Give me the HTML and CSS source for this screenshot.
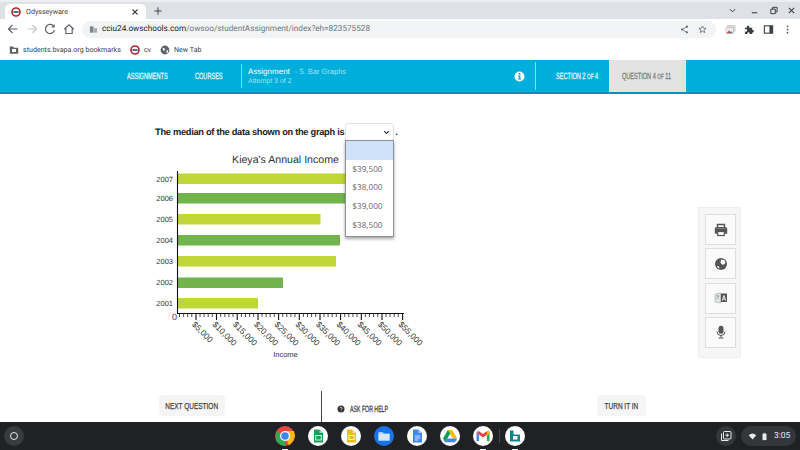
FILE: index.html
```html
<!DOCTYPE html>
<html lang="en">
<head>
<meta charset="utf-8">
<title>Odysseyware</title>
<link rel="stylesheet" href="styles.css">
</head>
<body>
<div class="screen">
  <div class="tabstrip">
    <div class="tab">
      <svg class="fav" viewBox="0 0 10 10"><circle cx="5" cy="5" r="4" fill="#fff" stroke="#b3202c" stroke-width="1.6"/><rect x="2.4" y="4.2" width="5.2" height="1.6" fill="#2b4c7e"/></svg>
      <span class="tab-title">Odysseyware</span>
      <svg class="tab-x" viewBox="0 0 8 8"><path d="M1.5 1.5l5 5M6.5 1.5l-5 5" stroke="#3c4043" stroke-width="1.1"/></svg>
    </div>
    <svg class="tab-plus" viewBox="0 0 10 10"><path d="M5 .5v9M.5 5h9" stroke="#3c4043" stroke-width="1.2"/></svg>
    <div class="win-controls">
      <svg class="win-chevron" viewBox="0 0 10 10"><path d="M2 3.5L5 6.5 8 3.5" fill="none" stroke="#3c4043" stroke-width="1.1"/></svg>
      <svg viewBox="0 0 10 10"><path d="M2 7.5h6" stroke="#3c4043" stroke-width="1.2"/></svg>
      <svg viewBox="0 0 10 10"><path d="M2 3.5h5v5H2zM4 3.5V1.5h5v5H7" fill="none" stroke="#3c4043" stroke-width="1.1"/></svg>
      <svg viewBox="0 0 10 10"><path d="M2 2l6 6M8 2l-6 6" stroke="#3c4043" stroke-width="1.2"/></svg>
    </div>
  </div>

  <div class="toolbar">
    <svg class="nav" viewBox="0 0 12 12"><path d="M10.5 6h-9M5.5 2L1.5 6l4 4" fill="none" stroke="#5f6368" stroke-width="1.2"/></svg>
    <svg class="nav" viewBox="0 0 12 12"><path d="M1.5 6h9M6.5 2l4 4-4 4" fill="none" stroke="#c4c7ca" stroke-width="1.2"/></svg>
    <svg class="nav" viewBox="0 0 12 12"><path d="M10 3.6A4.6 4.6 0 1 0 10.5 7" fill="none" stroke="#5f6368" stroke-width="1.2"/><path d="M10.6 1v3.4H7.2z" fill="#5f6368"/></svg>
    <svg class="nav" viewBox="0 0 12 12"><path d="M1.2 6.2L6 1.8l4.8 4.4M2.8 5.2v5.3h6.4V5.2" fill="none" stroke="#5f6368" stroke-width="1.2"/></svg>
    <div class="omnibox">
      <svg class="site" viewBox="0 0 10 10"><path d="M1 1.5h4v7H1z" fill="#80868b"/><path d="M5 3.5h4v5H5z" fill="#a9adb2"/></svg>
      <span class="url"><span class="url-host">cciu24.owschools.com</span>/owsoo/studentAssignment/index?eh=823575528</span>
      <svg class="omni-icon share" viewBox="0 0 12 12"><circle cx="9.2" cy="2.2" r="1.4" fill="#5f6368"/><circle cx="2.8" cy="6" r="1.4" fill="#5f6368"/><circle cx="9.2" cy="9.8" r="1.4" fill="#5f6368"/><path d="M9.2 2.2L2.8 6l6.4 3.8" fill="none" stroke="#5f6368"/></svg>
      <svg class="omni-icon" viewBox="0 0 12 12"><path d="M6 1.3l1.4 3.1 3.4.3-2.6 2.2.8 3.3L6 8.2l-3 1.8.8-3.3-2.6-2.2 3.4-.3z" fill="none" stroke="#5f6368"/></svg>
    </div>
    <div class="tool-ext">
      <svg viewBox="0 0 12 12"><rect x="3" y="1.5" width="8" height="6.5" fill="#d9dcdf" stroke="#b5b8bb" stroke-width=".5"/><rect x="1" y="4" width="8" height="6.5" fill="#e9ebec" stroke="#a9acaf" stroke-width=".5"/><path d="M1.5 10l3-3 3 3z" fill="#c5463c"/><path d="M5.5 10l1.5-2 1.5 2z" fill="#4a7fb5"/></svg>
      <svg viewBox="0 0 12 12"><path d="M1 4h2.2a1.4 1.4 0 1 1 2.6-.6V4H9v2.6h.4a1.4 1.4 0 1 1 0 2.8H9V11H6.2v-.6a1.3 1.3 0 1 0-2.6 0v.6H1V8.2h.4a1.4 1.4 0 1 0 0-2.6H1z" fill="#3c4043"/></svg>
      <svg viewBox="0 0 12 12"><rect x="1.5" y="2" width="9" height="8" fill="none" stroke="#3c4043" stroke-width="1.2"/><rect x="7" y="2" width="3.5" height="8" fill="#3c4043"/></svg>
      <svg viewBox="0 0 12 12"><circle cx="6" cy="2.5" r="1" fill="#5f6368"/><circle cx="6" cy="6" r="1" fill="#5f6368"/><circle cx="6" cy="9.5" r="1" fill="#5f6368"/></svg>
    </div>
  </div>

  <div class="bookmarks">
    <svg class="bm-icon" viewBox="0 0 10 10"><path d="M.8 1.5h3.2l1 1.2h4.2v6H.8z" fill="#5f6368"/><rect x="3" y="4" width="4" height="3" fill="#fff"/></svg>
    <span class="bm-label">students.bvapa.org bookmarks</span>
    <svg class="bm-icon gap-cv" viewBox="0 0 10 10"><circle cx="5" cy="5" r="4" fill="#fff" stroke="#b3202c" stroke-width="1.6"/><rect x="2.4" y="4.2" width="5.2" height="1.6" fill="#2b4c7e"/></svg>
    <span class="bm-label">cv</span>
    <svg class="bm-icon gap-globe" viewBox="0 0 10 10"><circle cx="5" cy="5" r="4.4" fill="#5f6368"/><path d="M2.5 2.8l2 .5.5 1.6-1.6 1zM6.5 5.5l1.8-.5-.4 2.2-1.3 1z" fill="#fff"/></svg>
    <span class="bm-label">New Tab</span>
  </div>

  <header class="app-header">
    <nav class="app-nav">
      <span class="nav-item nav-assignments"><span class="cond">ASSIGNMENTS</span></span>
      <span class="nav-item nav-courses"><span class="cond">COURSES</span></span>
    </nav>
    <div class="assignment">
      <div class="assignment-line"><b>Assignment</b><span class="assignment-name">- 5. Bar Graphs</span></div>
      <div class="attempt">Attempt 3 of 2</div>
    </div>
    <svg class="info" viewBox="0 0 12 12"><circle cx="6" cy="6" r="5.5" fill="#fff"/><rect x="5" y="2.2" width="2" height="1.8" fill="#00aedb"/><path d="M4.4 5h2.6v3.4h.7v1H4.4v-1h.8V6h-.8z" fill="#00aedb"/></svg>
    <div class="section-label"><span class="cond">SECTION 2 <small>OF</small> 4</span></div>
    <div class="question-label"><span class="cond">QUESTION 4 <small>OF</small> 11</span></div>
  </header>

  <main class="stage">
    <div class="lesson">
      <div class="question">
        <span>The median of the data shown on the graph is</span>
        <div class="select">
          <svg class="chev" viewBox="0 0 8 8"><path d="M1.5 2.5L4 5.2l2.5-2.7" fill="none" stroke="#222" stroke-width="1.2"/></svg>
          <div class="menu">
            <div class="option option-blank"></div>
            <div class="option">$39,500</div>
            <div class="option">$38,000</div>
            <div class="option">$39,000</div>
            <div class="option">$38,500</div>
          </div>
        </div>
        <span>.</span>
      </div>
      <svg class="chart" viewBox="140 150 300 220" width="300" height="220">
        <text class="chart-title" x="285.5" y="163" text-anchor="middle">Kieya's Annual Income</text>
        <g class="bars">
          <rect x="178" y="173.5" width="170" height="10.5" fill="#bfd637"/>
          <rect x="178" y="193" width="170" height="10.5" fill="#72b44c"/>
          <rect x="178" y="214" width="142.500" height="10.500" fill="#bfd637"/>
          <rect x="178" y="235" width="162" height="10.500" fill="#72b44c"/>
          <rect x="178" y="256" width="158" height="10.500" fill="#bfd637"/>
          <rect x="178" y="277.500" width="105" height="10.500" fill="#72b44c"/>
          <rect x="178" y="298" width="80" height="10.500" fill="#bfd637"/>
        </g>
        <g class="ylabels" text-anchor="end">
          <text x="173" y="182">2007</text>
          <text x="173" y="201">2006</text>
          <text x="173" y="222">2005</text>
          <text x="173" y="243">2004</text>
          <text x="173" y="264">2003</text>
          <text x="173" y="285">2002</text>
          <text x="173" y="306">2001</text>
        </g>
        <path d="M177.500 171V314M177 313.500H404" stroke="#111" stroke-width="1.100" fill="none"/>
        <path stroke="#222" stroke-width=".8" d="M179.500 314v3M183.600 314v3M187.700 314v3M191.800 314v3M200 314v3M204.100 314v3M208.200 314v3M212.300 314v3M220.700 314v3M224.800 314v3M228.900 314v3M233 314v3M241.400 314v3M245.500 314v3M249.600 314v3M253.700 314v3M262 314v3M266.100 314v3M270.200 314v3M274.300 314v3M282.700 314v3M286.800 314v3M290.900 314v3M295 314v3M303.400 314v3M307.500 314v3M311.600 314v3M315.700 314v3M324 314v3M328.100 314v3M332.200 314v3M336.300 314v3M344.700 314v3M348.800 314v3M352.900 314v3M357 314v3M365.400 314v3M369.500 314v3M373.600 314v3M377.700 314v3M386 314v3M390.100 314v3M394.200 314v3M398.300 314v3"/>
        <path stroke="#111" stroke-width="1.100" d="M196 314v6M216.500 314v6M237.200 314v6M258 314v6M278.600 314v6M299.300 314v6M320 314v6M340.600 314v6M361.300 314v6M382 314v6M402.600 314v6"/>
        <g class="xlabels">
          <text x="172" y="320" class="zero">0</text>
          <text transform="translate(191.500 325) rotate(45)">$5,000</text>
          <text transform="translate(212 325) rotate(45)">$10,000</text>
          <text transform="translate(232.500 325) rotate(45)">$15,000</text>
          <text transform="translate(253.500 325) rotate(45)">$20,000</text>
          <text transform="translate(274 325) rotate(45)">$25,000</text>
          <text transform="translate(295 325) rotate(45)">$30,000</text>
          <text transform="translate(315.500 325) rotate(45)">$35,000</text>
          <text transform="translate(336 325) rotate(45)">$40,000</text>
          <text transform="translate(357 325) rotate(45)">$45,000</text>
          <text transform="translate(377.500 325) rotate(45)">$50,000</text>
          <text transform="translate(398 325) rotate(45)">$55,000</text>
        </g>
        <text class="axis-title" x="285.500" y="357" text-anchor="middle">Income</text>
      </svg>
    </div>
    <aside class="tools">
      <div class="tool"><svg viewBox="0 0 14 14"><path d="M3.500 5V1.500h7V5M3.500 10H1.500V5.800a1 1 0 0 1 1-1h9a1 1 0 0 1 1 1V10h-2" fill="#fff" stroke="#555" stroke-width="1.400"/><rect x="1" y="5.500" width="12" height="4" fill="#555"/><rect x="3.700" y="8.500" width="6.600" height="4" fill="#fff" stroke="#555" stroke-width="1.200"/></svg></div>
      <div class="tool"><svg viewBox="0 0 14 14"><circle cx="7" cy="7" r="6" fill="#555"/><path d="M7 2.500l3.500.8 1 2.700-2.500 2L6.500 6zM3 9l2 .5 .5 2L4 11z" fill="#fff"/></svg></div>
      <div class="tool"><svg viewBox="0 0 14 14"><path d="M1 3l5.500-1v10L1 11z" fill="#dfe3e3" stroke="#999" stroke-width=".5"/><path d="M7 2.500h6V11H7z" fill="#555"/><path d="M8.300 9.500L10 4.500l1.700 5M9 8h2" stroke="#fff" stroke-width=".9" fill="none"/><path d="M2.500 5h2.500M3.700 4v1M4.500 5c-.3 1.500-1 2.500-2 3" stroke="#777" stroke-width=".6" fill="none"/></svg></div>
      <div class="tool"><svg viewBox="0 0 14 14"><rect x="4.500" y="0.800" width="5" height="8" rx="2.500" fill="#555"/><path d="M3 6.500a4 4 0 0 0 8 0M7 10.500v2M4.500 13h5" fill="none" stroke="#555" stroke-width="1"/></svg></div>
    </aside>
  </main>

  <footer class="actions">
    <button class="action next"><span class="cond-center">NEXT QUESTION</span></button>
    <div class="help">
      <svg viewBox="0 0 8 8"><circle cx="4" cy="4" r="3.500" fill="#333"/><path d="M3 3.200a1 1 0 1 1 1.500.9c-.4.2-.5.4-.5.7" fill="none" stroke="#fff" stroke-width=".7"/><circle cx="4" cy="6" r=".45" fill="#fff"/></svg>
      <span class="cond help-text">ASK FOR HELP</span>
    </div>
    <button class="action turn"><span class="cond-center">TURN IT IN</span></button>
  </footer>

  <div class="shelf">
    <div class="launcher"><span class="launcher-ring"></span></div>
    <div class="dock">
      <svg class="app" viewBox="0 0 20 20"><circle cx="10" cy="10" r="10" fill="#e8453c"/><path d="M10 10L1.300 5 1 15l5 4.200L11 20z" fill="#34a853"/><path d="M10 5h9l1 5-2 5-4 4.500-4-9.500z" fill="#f9bc15"/><circle cx="10" cy="10" r="5" fill="#fff"/><circle cx="10" cy="10" r="3.800" fill="#4285f4"/></svg>
      <svg class="app" viewBox="0 0 20 20"><circle cx="10" cy="10" r="10" fill="#fff"/><path d="M6 3.500h5.500L15 7v9.500H6z" fill="#1e9e5a"/><path d="M11.500 3.500L15 7h-3.500z" fill="#8ed1ab"/><rect x="7.800" y="9.500" width="5.400" height="4.500" fill="none" stroke="#fff" stroke-width=".8"/></svg>
      <svg class="app" viewBox="0 0 20 20"><circle cx="10" cy="10" r="10" fill="#fff"/><path d="M6 3.500h5.500L15 7v9.500H6z" fill="#f5b81d"/><path d="M11.500 3.500L15 7h-3.500z" fill="#fbe09a"/><rect x="7.800" y="9.500" width="5.400" height="4" fill="none" stroke="#fff" stroke-width=".8"/></svg>
      <svg class="app" viewBox="0 0 20 20"><circle cx="10" cy="10" r="10" fill="#1a73e8"/><path d="M4.500 6h4l1.500 1.500h5.500v7h-11z" fill="#a8d0fb"/><path d="M4.500 8h11v6.500h-11z" fill="#d2e6fd"/></svg>
      <svg class="app" viewBox="0 0 20 20"><circle cx="10" cy="10" r="10" fill="#fff"/><path d="M6 3.500h5.500L15 7v9.500H6z" fill="#4285f4"/><path d="M11.500 3.500L15 7h-3.500z" fill="#a6c8fa"/><path d="M7.800 10h5.400M7.800 12h5.400M7.800 14h3.500" stroke="#fff" stroke-width=".8"/></svg>
      <svg class="app" viewBox="0 0 20 20"><circle cx="10" cy="10" r="10" fill="#fff"/><path d="M7.800 4h4.400l5 8.500H12.800z" fill="#fbbc04"/><path d="M7.800 4L3 12.500l2.200 3.700 5-8.700z" fill="#0f9d58"/><path d="M5.200 16.200h9.800l2.200-3.700H7.300z" fill="#4285f4"/></svg>
      <svg class="app" viewBox="0 0 20 20"><circle cx="10" cy="10" r="10" fill="#fff"/><path d="M3.500 6v9h2.600V9z" fill="#4285f4"/><path d="M16.500 6v9h-2.600V9z" fill="#34a853"/><path d="M3.500 5.800l2.600 3L10 11.500l3.900-2.700 2.600-3-2.600-.5L10 8 6 5.300z" fill="#ea4335"/><path d="M13.900 5.300l2.600.5v2l-2.600 1.500z" fill="#fbbc04"/></svg>
      <span class="dock-divider"></span>
      <svg class="app" viewBox="0 0 20 20"><circle cx="10" cy="10" r="10" fill="#fff"/><path d="M5 4.500h3.500v4h6.500v7H5z" fill="#14848c"/><rect x="8" y="10" width="4.500" height="3.500" fill="#fff"/></svg>
      <span class="dot dot-chrome"></span>
      <span class="dot dot-gmail"></span>
      <span class="dot dot-app"></span>
    </div>
    <div class="tray">
      <div class="overview"><svg viewBox="0 0 12 12"><rect x="3.500" y="1.500" width="7.500" height="7.500" rx="1" fill="none" stroke="#e8eaed"/><path d="M1.500 3.500V10.500H8.500M7.200 3.500v3.500M5.500 5.200H9" fill="none" stroke="#e8eaed"/></svg></div>
      <div class="status">
        <svg viewBox="0 0 10 10"><path d="M.8 3.500a6.500 6.500 0 0 1 8.400 0L5 8.200z" fill="#e8eaed"/></svg>
        <svg viewBox="0 0 10 10"><rect x="2.800" y="2" width="4.400" height="7" fill="#e8eaed"/><rect x="4" y="1" width="2" height="1" fill="#e8eaed"/></svg>
        <span>3:05</span>
      </div>
    </div>
  </div>
</div>
</body>
</html>
```
FILE: styles.css
```css
* { box-sizing: border-box; }
html, body { margin: 0; padding: 0; }
body { font-family: "Liberation Sans", Arial, sans-serif; background: #fff; text-rendering: geometricPrecision; }
.screen { width: 800px; height: 450px; display: flex; flex-direction: column; overflow: hidden; }

.cond { display: inline-block; transform: scaleX(.62); transform-origin: left center; white-space: nowrap; -webkit-text-stroke: .25px currentColor; }
.cond-center { display: inline-block; transform: scaleX(.72); white-space: nowrap; -webkit-text-stroke: .25px currentColor; }

.tabstrip { height: 19px; background: #dee1e6; border-top: 2px solid #eceef0; display: flex; align-items: flex-end; flex: none; }
.tab { width: 141px; height: 15px; margin-left: 5px; background: #fff; border-radius: 5px 5px 0 0; display: flex; align-items: center; padding-left: 6px; }
.fav { width: 10px; height: 10px; flex: none; }
.tab-title { font: 7.1px Roboto, sans-serif; color: #3c4043; margin-left: 5px; flex: 1; }
.tab-x { width: 8px; height: 8px; margin-right: 7px; }
.tab-plus { width: 8px; height: 8px; margin: 0 0 4px 8px; }
.win-controls { margin-left: auto; display: flex; gap: 9.5px; padding: 0 4px 4px 0; }
.win-controls svg { width: 9px; height: 9px; }
.win-controls .win-chevron { margin-right: 4px; }

.toolbar { height: 20px; display: flex; align-items: center; background: #fff; flex: none; padding-left: 7px; }
.nav { width: 12px; height: 12px; margin-right: 6.5px; flex: none; }
.omnibox { width: 236px; flex: 1; height: 17px; margin-left: 1px; background: #f1f3f4; border-radius: 9px; display: flex; align-items: center; padding-left: 7px; }
.site { width: 9px; height: 9px; flex: none; }
.url { font: 8.2px Roboto, sans-serif; color: #70757a; margin-left: 4px; white-space: nowrap; }
.url-host { color: #202124; }
.omni-icon { width: 9px; height: 9px; margin-right: 9px; flex: none; }
.share { margin-left: auto; }
.tool-ext { display: flex; gap: 8px; padding: 0 7px 0 9px; }
.tool-ext svg { width: 11px; height: 11px; }

.bookmarks { height: 21px; display: flex; align-items: center; padding-left: 9px; background: #fff; flex: none; }
.bm-icon { width: 10px; height: 10px; flex: none; margin-right: 4px; }
.bm-label { font: 7.1px Roboto, sans-serif; color: #3c4043; white-space: nowrap; }
.gap-cv { margin-left: 9px; }
.gap-globe { margin-left: 9px; }

.app-header { height: 34px; background: #00aedb; border-bottom: 2px solid #0095b5; display: flex; align-items: center; flex: none; color: #fff; }
.app-nav { display: flex; padding-left: 127px; width: 241px; flex: none; font-size: 9px; color: #eaf8fc; }
.nav-item { display: block; }
.nav-assignments { width: 68px; }
.nav-courses { width: 40px; }
.assignment { height: 24px; border-left: 1px solid #8bd8ec; padding-left: 6px; width: 273px; flex: none; display: flex; flex-direction: column; justify-content: center; gap: 2px; }
.assignment-line { font-size: 8px; display: flex; gap: 5px; color: #fff; }
.assignment-line b { font-weight: 400; }
.assignment-name { color: #a5e2f2; font-size: 7.5px; }
.attempt { font-size: 7px; color: #a5e2f2; }
.info { width: 11px; height: 11px; flex: none; }
.section-label { height: 28px; border-left: 1px solid #8bd8ec; margin-left: 10px; padding-left: 20px; width: 74px; flex: none; font-size: 9px; line-height: 28px; white-space: nowrap; color: #eaf8fc; }
.question-label { height: 32px; width: 77px; flex: none; background: #e3e3e3; color: #777; padding-left: 13px; font-size: 9px; line-height: 32px; white-space: nowrap; align-self: flex-start; }
.section-label small, .question-label small { font-size: 7.5px; }

.stage { flex: none; height: 297px; display: flex; }
.lesson { width: 300px; flex: none; margin-left: 140px; padding-top: 29px; }
.question { height: 18px; padding-left: 15px; display: flex; align-items: center; font-size: 9.3px; font-weight: 700; color: #222; gap: 1px; white-space: nowrap; letter-spacing: -.3px; }
.select { position: relative; width: 49px; height: 18px; flex: none; border: 1px solid #e2e2e2; border-radius: 3px; background: #fff; letter-spacing: 0; }
.chev { position: absolute; right: 3px; top: 5px; width: 7px; height: 7px; }
.menu { position: absolute; left: -1px; top: 16px; width: 49px; height: 97px; background: #fff; border: 1px solid #8a9097; box-shadow: 0 2px 3px rgba(0,0,0,.35); font: 400 8.2px "Open Sans", sans-serif; color: #666; z-index: 2; }
.option { height: 18.7px; padding-left: 6px; line-height: 19.5px; }
.option-blank { background: #cfe2f9; }
.chart { display: block; margin-top: 9px; }
.chart text { font-family: "Liberation Sans", Arial, sans-serif; fill: #333; }
.chart .chart-title { font-size: 10.6px; }
.ylabels text { font-size: 7.5px; }
.xlabels text { font-size: 8.4px; }
.xlabels .zero { font-size: 9px; }
.axis-title { font-size: 7.5px; }

.tools { margin: 113px 0 0 258px; width: 43px; height: 151px; padding: 6px; background: #f6f6f6; border: 1px solid #eeeeee; display: flex; flex-direction: column; gap: 3.300px; flex: none; }
.tool { width: 31px; height: 31px; background: #fafafa; border: 1px solid #dedede; display: flex; align-items: center; justify-content: center; flex: none; }
.tool svg { width: 14px; height: 14px; }

.actions { flex: none; height: 31px; display: flex; align-items: flex-end; padding: 0 154px 6px 159px; }
.action { height: 21px; border: 0; border-radius: 3px; background: #f5f5f5; font: 9px "Liberation Sans", sans-serif; color: #444; padding: 0; white-space: nowrap; display: flex; align-items: center; justify-content: center; flex: none; }
.next { width: 66px; }
.help { align-self: stretch; margin: 0 0 -6px 96px; width: 276px; flex: none; border-left: 1px solid #444; display: flex; align-items: flex-end; padding: 0 0 9px 15px; gap: 5px; font-size: 9px; color: #333; }
.help svg { width: 8px; height: 8px; flex: none; }
.help .help-text { line-height: 8px; transform: scaleX(.58); }
.turn { width: 49px; }

.shelf { flex: 1; background: #202124; display: flex; align-items: center; position: relative; }
.launcher { width: 20px; height: 20px; margin-left: 4px; border-radius: 50%; background: #3a3b3e; display: flex; align-items: center; justify-content: center; flex: none; }
.launcher-ring { width: 8px; height: 8px; border: 1.300px solid #e8eaed; border-radius: 50%; }
.dock { margin-left: 251px; display: flex; align-items: center; gap: 13px; position: relative; }
.app { width: 20px; height: 20px; flex: none; }
.dock-divider { width: 1px; height: 14px; background: #44464a; margin: 0 -7.500px; flex: none; }
.dot { position: absolute; bottom: -4px; width: 6px; height: 1px; background: #e8eaed; }
.dot-chrome { left: 7px; }
.dot-gmail { left: 205px; }
.dot-app { left: 237px; }
.tray { margin-left: auto; display: flex; align-items: center; gap: 5px; padding-right: 4px; }
.overview { width: 20px; height: 20px; border-radius: 50%; background: #35363a; display: flex; align-items: center; justify-content: center; }
.overview svg { width: 12px; height: 12px; }
.status { width: 55px; height: 20px; border-radius: 10px; background: #35363a; display: flex; align-items: center; padding-left: 7px; gap: 3px; font: 8.500px Roboto, sans-serif; color: #e8eaed; }
.status svg { width: 9px; height: 9px; flex: none; }
.status span { margin-left: 2px; }
```
